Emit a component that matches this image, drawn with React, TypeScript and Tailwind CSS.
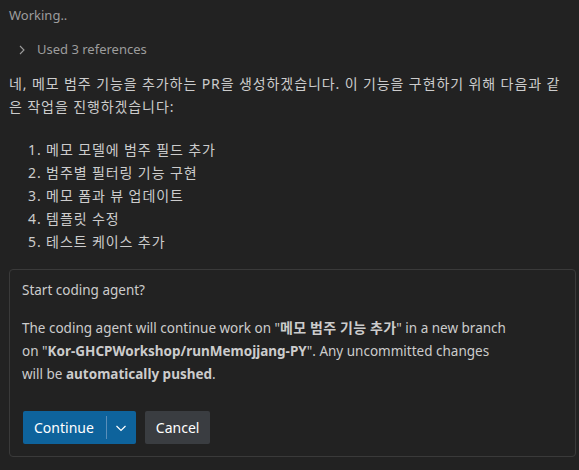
import React from "react";

const font = { fontFamily: '"Noto Sans", "Noto Sans CJK KR", sans-serif' };

export default function App() {
  return (
    <div className="w-[579px] h-[470px] bg-[#222222] text-[#cccccc] overflow-hidden" style={font}>
      <div className="pl-[9px] pr-[3px] pt-[4px]">
        <div className="text-[13px] leading-[22px] text-[#9d9d9d]">Working..</div>
        <div className="mt-[13px] flex items-center h-[22px] text-[13px] text-[#9d9d9d]">
          <svg width="16" height="16" viewBox="0 0 16 16" className="ml-[5px] mr-[7px]">
            <path d="M6 4l4 4-4 4" fill="none" stroke="#9d9d9d" strokeWidth="1.1" />
          </svg>
          <span>Used 3 references</span>
        </div>
        <p className="mt-[11px] text-[14px] leading-[23px] tracking-[0.9px] text-[#cccccc] whitespace-nowrap">
          네, 메모 범주 기능을 추가하는 PR을 생성하겠습니다. 이 기능을 구현하기 위해 다음과 같
          <br />
          은 작업을 진행하겠습니다:
        </p>
        <ol className="mt-[20px] pl-[19px] text-[14px] leading-[23px] tracking-[0.9px]">
          <li>1. 메모 모델에 범주 필드 추가</li>
          <li>2. 범주별 필터링 기능 구현</li>
          <li>3. 메모 폼과 뷰 업데이트</li>
          <li>4. 템플릿 수정</li>
          <li>5. 테스트 케이스 추가</li>
        </ol>
        <div className="mt-[16px] w-[567px] h-[188px] border border-[#3a3a3a] rounded-[4px] px-[12px] pt-[9px] text-[13.5px]">
          <div className="leading-[23px]">Start coding agent?</div>
          <p className="mt-[14px] leading-[23px] whitespace-nowrap">
            The coding agent will continue work on "
            <b className="font-bold text-[14px] tracking-[0.2px]">메모 범주 기능 추가</b>" in a new branch
            <br />
            on "<b className="font-bold">Kor-GHCPWorkshop/runMemojjang-PY</b>". Any uncommitted changes
            <br />
            will be <b className="font-bold">automatically pushed</b>.
          </p>
          <div className="mt-[25px] flex gap-[9px] pl-[1px]">
            <div className="flex items-center h-[33px] bg-[#0e639c] rounded-[2px] text-white text-[14px]">
              <span className="pl-[11px] pr-[12px]">Continue</span>
              <span className="w-px h-[23px] bg-[#5a8fba]" />
              <span className="flex items-center justify-center w-[29px]">
                <svg width="16" height="16" viewBox="0 0 16 16">
                  <path d="M3.5 6l4.5 4.5L12.5 6" fill="none" stroke="white" strokeWidth="1.2" />
                </svg>
              </span>
            </div>
            <div className="flex items-center h-[33px] px-[11px] bg-[#3a3d41] rounded-[2px] text-white text-[14px]">
              Cancel
            </div>
          </div>
        </div>
      </div>
    </div>
  );
}
